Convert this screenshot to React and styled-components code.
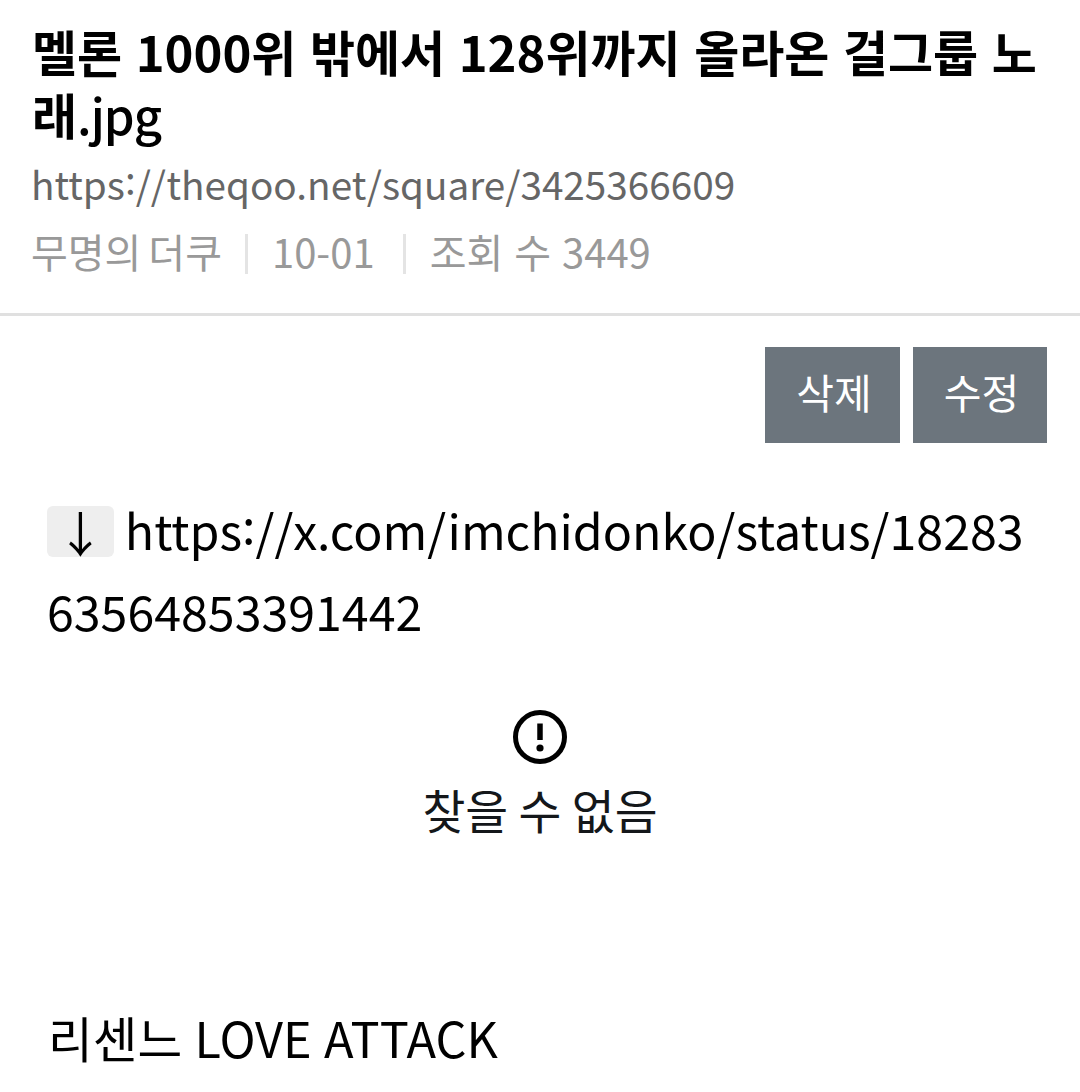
import React from 'react'
import styled, { createGlobalStyle } from 'styled-components'

const GlobalStyle = createGlobalStyle`
    html, body {
        margin: 0;
        padding: 0;
        background: #fff;
    }
    body {
        font-family: "Noto Sans CJK KR", "Noto Sans", sans-serif;
    }
`

function App() {
    return (
        <Page>
            <GlobalStyle />
            <Header>
                <Title>멜론 1000위 밖에서 128위까지 올라온 걸그룹 노래<FileExt>.jpg</FileExt></Title>
                <SourceUrl>https<Colon>:</Colon>//theqoo.net/square/3425366609</SourceUrl>
                <Meta>
                    <MetaItem $wordGap={-2}>무명의 더쿠</MetaItem>
                    <Divider $left={23} />
                    <MetaItem>10-01</MetaItem>
                    <Divider $left={28} />
                    <MetaItem $wordGap={2}>조회 수 3449</MetaItem>
                </Meta>
            </Header>
            <Actions>
                <ActionButton $width={135}>삭제</ActionButton>
                <ActionButton $width={134}>수정</ActionButton>
            </Actions>
            <Content>
                <LinkLine><ArrowKey>↓</ArrowKey> https<Colon>:</Colon>//x.com/imchidonko/status/1828363564853391442</LinkLine>
                <Missing>
                    <svg width="56" height="56" viewBox="0 0 56 56" fill="none">
                        <circle cx="28" cy="28" r="24.5" stroke="#000" strokeWidth="5" />
                        <path d="M28 14.5V31" stroke="#000" strokeWidth="5.5" />
                        <circle cx="28" cy="39" r="3.6" fill="#000" />
                    </svg>
                    <MissingText>찾을 수 없음</MissingText>
                </Missing>
                <SongLine>리센느 LOVE ATTACK</SongLine>
            </Content>
        </Page>
    )
}

export default App

const Page = styled.div`
    width: 1080px;
    height: 1092px;
    overflow: hidden;
    background: #fff;
`

const Header = styled.div`
    padding: 19px 32px 32px;
    border-bottom: 3px solid #e0e0e0;
`

const Title = styled.h1`
    margin: 0;
    font-size: 49px;
    word-spacing: 2.4px;
    line-height: 63px;
    font-weight: 700;
    color: #000;
    word-break: break-all;
`

const FileExt = styled.span`
    font-weight: 500;
    letter-spacing: -1px;
`

const SourceUrl = styled.div`
    margin: 8px 0 0 -1px;
    font-size: 38.7px;
    line-height: 60px;
    color: #666;
`

const Colon = styled.span`
    line-height: 0;
    vertical-align: 0.12em;
`

const Meta = styled.div`
    display: flex;
    align-items: center;
    margin: 8px 0 0 -1px;
    font-size: 40px;
    line-height: 60px;
    color: #999;
`

const MetaItem = styled.span`
    word-spacing: ${props => props.$wordGap || 0}px;
`

const Divider = styled.i`
    display: block;
    width: 3px;
    height: 40px;
    margin: 5px 24px 0 ${props => props.$left}px;
    background: #e4e4e4;
`

const Actions = styled.div`
    display: flex;
    justify-content: flex-end;
    gap: 13px;
    padding: 31px 33px 0 0;
`

const ActionButton = styled.div`
    box-sizing: border-box;
    display: flex;
    align-items: center;
    justify-content: center;
    width: ${props => props.$width}px;
    height: 96px;
    padding: 0 0 8px 3px;
    background: #6c757d;
    color: #fff;
    font-size: 41px;
`

const Content = styled.div`
    padding: 46px 47px 0;
    color: #000;
    font-size: 48.3px;
    line-height: 81px;
`

const LinkLine = styled.div`
    word-break: break-all;
`

const ArrowKey = styled.span`
    display: inline-block;
    width: 67px;
    height: 51px;
    line-height: 51px;
    text-align: center;
    vertical-align: -2px;
    border-radius: 6px;
    background: #eee;
`

const Missing = styled.div`
    display: flex;
    flex-direction: column;
    align-items: center;
    margin-top: 58px;
`

const MissingText = styled.div`
    margin-top: 9px;
    color: #14171a;
    font-size: 46.6px;
    line-height: 70px;
`

const SongLine = styled.div`
    margin: 153px 0 0 1px;
    font-size: 48.6px;
    word-spacing: 1.5px;
`
